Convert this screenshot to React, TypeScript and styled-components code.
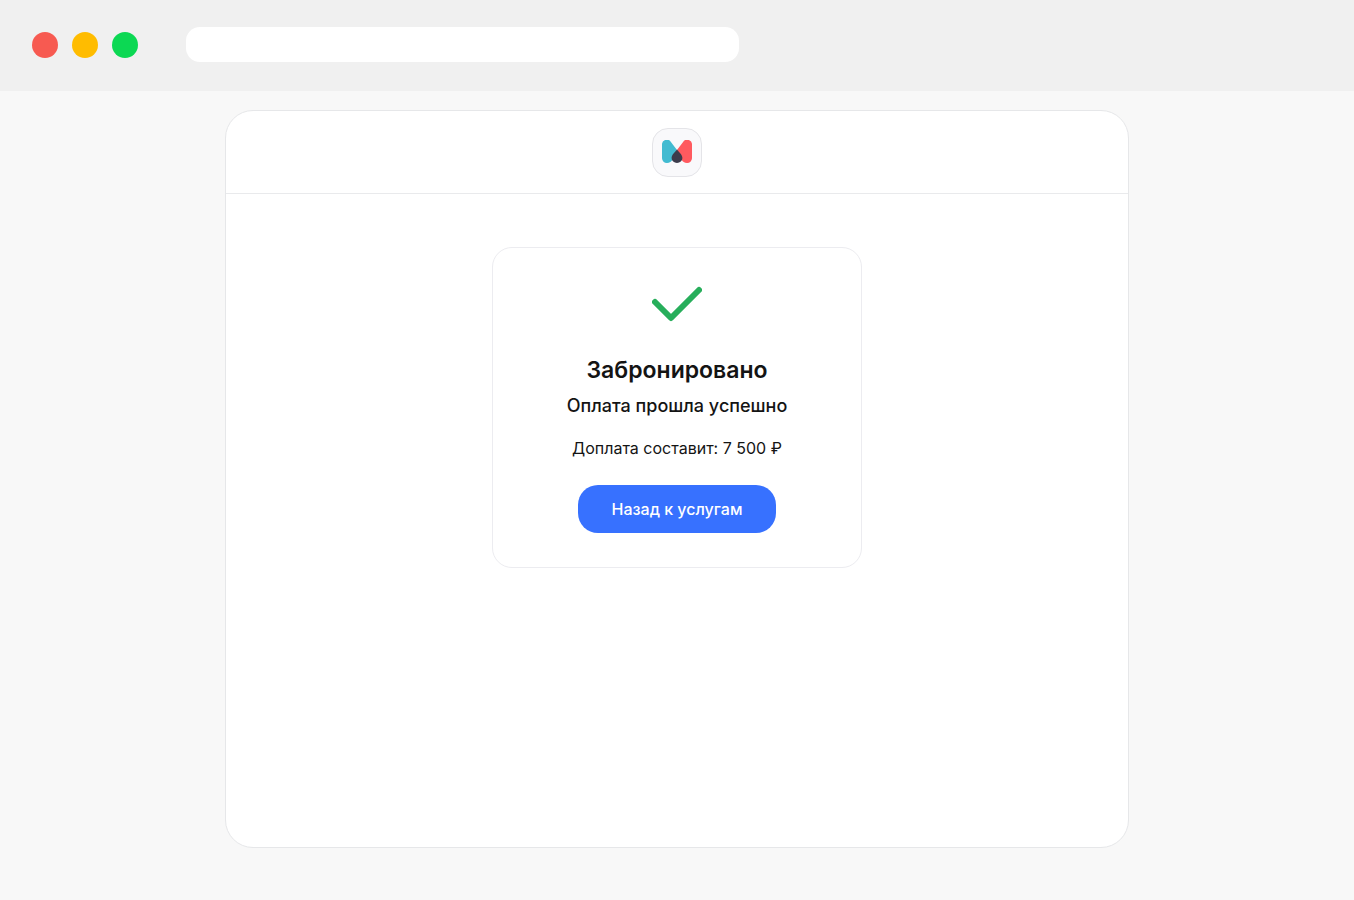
import React from "react";
import styled, { createGlobalStyle } from "styled-components";

const GlobalStyle = createGlobalStyle`
  *, *::before, *::after { box-sizing: border-box; }
  body {
    margin: 0;
    background: #f8f8f8;
    color: #141414;
    font-family: Inter, "Liberation Sans", sans-serif;
  }
`;

const Page = styled.div`
  display: flex;
  flex-direction: column;
  min-height: 100vh;
`;

const BrowserBar = styled.header`
  display: flex;
  align-items: center;
  gap: 48px;
  height: 91px;
  padding: 0 32px 2px;
  background: #f0f0f0;
`;

const WindowControls = styled.div`
  display: flex;
  gap: 14px;
`;

const Dot = styled.span<{ $color: string }>`
  width: 26px;
  height: 26px;
  border-radius: 50%;
  background: ${({ $color }) => $color};
`;

const AddressInput = styled.input`
  flex: 0 1 553px;
  min-width: 0;
  height: 35px;
  padding: 0 16px;
  border: 0;
  border-radius: 14px;
  background: #fff;
  font: inherit;
`;

const Content = styled.div`
  display: flex;
  flex: 1;
  justify-content: center;
  padding: 19px 24px 52px;
`;

const Frame = styled.div`
  display: flex;
  flex-direction: column;
  width: 100%;
  max-width: 904px;
  border: 1px solid #e6e7e9;
  border-radius: 28px;
  background: #fff;
`;

const FrameHeader = styled.div`
  display: flex;
  justify-content: center;
  padding: 17px 0 16px;
  border-bottom: 1px solid #e9eaec;
`;

const LogoTile = styled.div`
  display: flex;
  align-items: center;
  justify-content: center;
  width: 50px;
  height: 49px;
  padding-bottom: 2px;
  border: 1px solid #e4e4e8;
  border-radius: 16px;
  background: #f9f9fb;
`;

const Main = styled.main`
  display: flex;
  justify-content: center;
  padding: 53px 24px;
`;

const Card = styled.section`
  display: flex;
  flex-direction: column;
  align-items: center;
  width: 100%;
  max-width: 370px;
  padding: 38px 24px 34px;
  border: 1px solid #ececf0;
  border-radius: 20px;
  text-align: center;
`;

const Title = styled.h1`
  margin: 32px 0 0;
  font-size: 23px;
  font-weight: 600;
  line-height: 32px;
`;

const Subtitle = styled.p`
  margin: 8px 0 0;
  font-size: 18px;
  font-weight: 500;
  line-height: 24px;
`;

const Balance = styled.p`
  margin: 20px 0 0;
  font-size: 16px;
  line-height: 20px;
`;

const BackButton = styled.button`
  height: 48px;
  margin-top: 27px;
  padding: 0 34px;
  border: 0;
  border-radius: 20px;
  background: #3771ff;
  color: #fff;
  font: inherit;
  font-size: 16px;
  font-weight: 500;
  cursor: pointer;
`;

const Logo = () => (
  <svg width="30" height="23" viewBox="0 0 30 23" role="img" aria-label="M">
    <path
      d="M0 4.8A4.8 4.8 0 0 1 8.9 2L15 10 10.5 19.5C9.5 21.8 7.5 23 5 23A4.9 4.9 0 0 1 0 18.2Z"
      fill="#42bbd1"
    />
    <path
      d="M30 4.8A4.8 4.8 0 0 0 21.1 2L15 10 19.5 19.5C20.5 21.8 22.5 23 25 23A4.9 4.9 0 0 0 30 18.2Z"
      fill="#ff5a5f"
    />
    <path
      d="M15 9.6C16.4 11.6 20.4 14.8 20.4 17.9A5.4 5.1 0 0 1 9.6 17.9C9.6 14.8 13.6 11.6 15 9.6Z"
      fill="#3c3c4c"
    />
  </svg>
);

const CheckMark = () => (
  <svg width="50" height="36" viewBox="0 0 50 36" fill="none" aria-hidden="true">
    <path
      d="M3 16 19 32 47 4"
      stroke="#27ae5b"
      strokeWidth="6"
      strokeLinecap="round"
      strokeLinejoin="round"
    />
  </svg>
);

export default function App() {
  return (
    <Page>
      <GlobalStyle />
      <BrowserBar>
        <WindowControls>
          <Dot $color="#f75a51" />
          <Dot $color="#ffbc00" />
          <Dot $color="#0cd853" />
        </WindowControls>
        <AddressInput type="text" aria-label="Адрес" />
      </BrowserBar>
      <Content>
        <Frame>
          <FrameHeader>
            <LogoTile>
              <Logo />
            </LogoTile>
          </FrameHeader>
          <Main>
            <Card>
              <CheckMark />
              <Title>Забронировано</Title>
              <Subtitle>Оплата прошла успешно</Subtitle>
              <Balance>Доплата составит: 7 500 ₽</Balance>
              <BackButton type="button">Назад к услугам</BackButton>
            </Card>
          </Main>
        </Frame>
      </Content>
    </Page>
  );
}
